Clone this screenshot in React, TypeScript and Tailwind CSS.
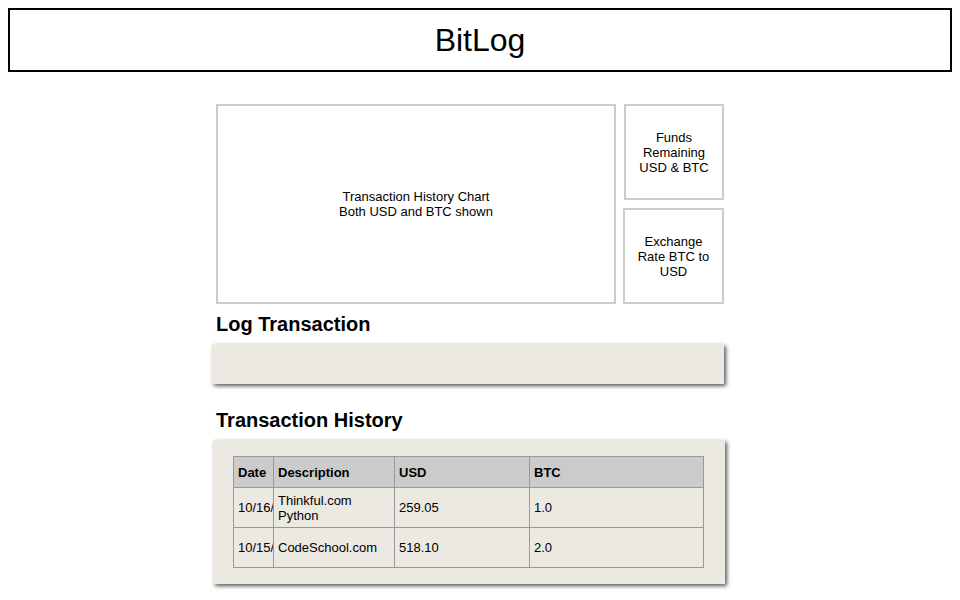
import React from "react";

const rows = [
  { date: "10/16/2014", desc: "Thinkful.com Python", usd: "259.05", btc: "1.0" },
  { date: "10/15/2014", desc: "CodeSchool.com", usd: "518.10", btc: "2.0" },
];

export default function App() {
  return (
    <div className="bg-white min-h-[600px] p-2 text-black" style={{ fontFamily: '"Liberation Sans", Arial, sans-serif' }}>
      <header className="h-16 border-2 border-black flex items-center justify-center">
        <h1 className="text-[32px] leading-none font-normal">BitLog</h1>
      </header>

      <main className="ml-[204px] w-[514px] mt-8">
        <div className="flex">
          <div className="ml-1 w-[400px] h-[200px] border-2 border-[#cccccc] flex items-center justify-center text-center text-[13px] leading-[15px]">
            <div>
              Transaction History Chart
              <br />
              Both USD and BTC shown
            </div>
          </div>
          <div className="flex flex-col">
            <div className="ml-2 w-[100px] h-[96px] border-2 border-[#cccccc] flex items-center justify-center text-center text-[13px] leading-[15px] px-2">
              Funds Remaining USD &amp; BTC
            </div>
            <div className="ml-[7px] mt-2 w-[101px] h-[96px] border-2 border-[#cccccc] flex items-center justify-center text-center text-[13px] leading-[15px] px-2">
              Exchange Rate BTC to USD
            </div>
          </div>
        </div>

        <h2 className="ml-1 mt-2 text-[20px] leading-6 font-bold">Log Transaction</h2>
        <div className="mt-2 w-[512px] h-10 bg-[#ece9e3] shadow-[2px_2px_4px_rgba(0,0,0,0.65)]" />

        <h2 className="ml-1 mt-6 text-[20px] leading-6 font-bold">Transaction History</h2>
        <div className="ml-px mt-2 w-[512px] h-[144px] bg-[#ece9e3] shadow-[2px_2px_4px_rgba(0,0,0,0.65)] pt-4 pl-5">
          <table className="table-fixed border-collapse w-[470px] text-[13px] leading-[15px]">
            <colgroup>
              <col className="w-[40px]" />
              <col className="w-[121px]" />
              <col className="w-[135px]" />
              <col className="w-[174px]" />
            </colgroup>
            <thead>
              <tr className="bg-[#cbcbcb] h-[31px]">
                <th className="border border-[#999999] text-left font-bold px-1">Date</th>
                <th className="border border-[#999999] text-left font-bold px-1">Description</th>
                <th className="border border-[#999999] text-left font-bold px-1">USD</th>
                <th className="border border-[#999999] text-left font-bold px-1">BTC</th>
              </tr>
            </thead>
            <tbody>
              {rows.map((r) => (
                <tr key={r.date} className="h-10">
                  <td className="border border-[#999999] pl-1 pr-0">
                    <div className="w-[35px] overflow-hidden whitespace-nowrap">{r.date}</div>
                  </td>
                  <td className="border border-[#999999] px-1">{r.desc}</td>
                  <td className="border border-[#999999] px-1">{r.usd}</td>
                  <td className="border border-[#999999] px-1">{r.btc}</td>
                </tr>
              ))}
            </tbody>
          </table>
        </div>
      </main>
    </div>
  );
}
